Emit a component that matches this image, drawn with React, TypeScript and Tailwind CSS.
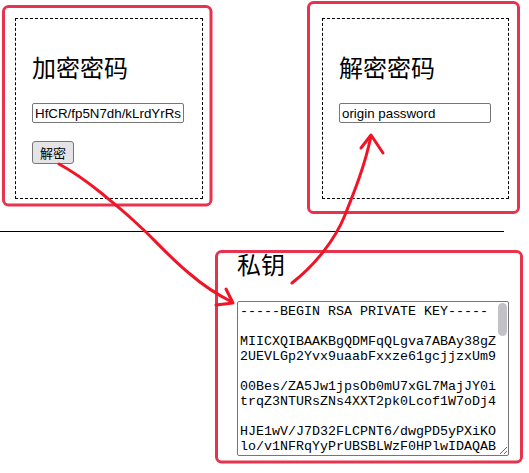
import React from "react";

const cjk = { fontFamily: '"Noto Sans CJK SC", "Noto Sans", sans-serif' };

const keyText = [
  "-----BEGIN RSA PRIVATE KEY-----",
  "",
  "MIICXQIBAAKBgQDMFqQLgva7ABAy38gZ",
  "2UEVLGp2Yvx9uaabFxxze61gcjjzxUm9",
  "",
  "00Bes/ZA5Jw1jpsOb0mU7xGL7MajJY0i",
  "trqZ3NTURsZNs4XXT2pk0Lcof1W7oDj4",
  "",
  "HJE1wV/J7D32FLCPNT6/dwgPD5yPXiKO",
  "lo/v1NFRqYyPrUBSBLWzF0HPlwIDAQAB",
  "",
  "AoGAHqZ0kS3Vd8ZtM1qXwP4yR7cL2nFj",
  "Eo9uT5bWk6sA3mGh0YxNq8vDr1lIeZpC",
  "",
  "w2KfJ7tUaO4nXs9gBy6QmLh3dVcR5iPe",
  "Z0oMq1uWk8TnAf2jYbSx7GlEr4Hd6NvC",
  "",
  "QJBAPx3mK9rTn2vWq7LcF1dGh8sYe4Ua",
  "0bZkN6oXj5RiMp3tEw9yHl2gVfSu1CqD",
  "",
  "AkEAz7Hn4KqL2wPx9cVb1mTr8sYe3Fgd",
  "Jo6uNa5Zi0RkWl2tXq7yMh4pEv1GsCbO",
  "",
  "AkBf8sLq2Wn5Xv7Kc1Tr9mYe3Hgd4Jpo",
  "Ua6Zi0NkRl2tEw9yMh5qGv1XsCbOz7Fn",
  "",
  "-----END RSA PRIVATE KEY-----",
].join("\n");

const Panel = ({
  title,
  value,
  button,
  className,
}: {
  title: string;
  value: string;
  button?: string;
  className: string;
}) => (
  <div
    className={`h-[181px] border border-dashed border-black pt-[32px] px-[16px] ${className}`}
  >
    <h2 className="text-[24px] leading-[32px] font-normal text-black" style={cjk}>
      {title}
    </h2>
    <input
      className="mt-[20px] block h-[20px] w-[152px] rounded-[2px] border border-[#767676] px-[2px] text-[13.33px] text-black outline-none"
      style={{ fontFamily: '"Liberation Sans", Arial, sans-serif' }}
      defaultValue={value}
    />
    {button && (
      <button
        className="mt-[18px] block h-[23px] w-[42px] rounded-[3px] border border-[#767676] bg-[#e4e4e6] text-[13px] leading-none text-black"
        style={cjk}
      >
        {button}
      </button>
    )}
  </div>
);

export default function App() {
  return (
    <div className="relative h-[473px] w-[529px] overflow-hidden bg-white">
      <div className="flex pt-[18px]">
        <Panel className="ml-[15px] w-[188px]" title="加密密码" value="HfCR/fp5N7dh/kLrdYrRs" button="解密" />
        <Panel className="ml-[119px] w-[187px]" title="解密密码" value="origin password" />
      </div>

      <hr className="mt-[32px] w-[504px] border-0 border-t border-black" />

      <div className="ml-[237px] pt-[16px]">
        <h2 className="text-[24px] leading-[32px] font-normal text-black" style={cjk}>
          私钥
        </h2>
        <div className="relative mt-[21px] w-[272px]">
          <textarea
            wrap="off"
            defaultValue={keyText}
            className="block h-[155px] w-[272px] overflow-x-hidden overflow-y-scroll rounded-[2px] border border-[#767676] p-[2px] text-[13.33px] leading-[15px] text-black outline-none"
            style={{ fontFamily: '"Liberation Mono", "Courier New", monospace' }}
          />
          {/* scroll thumb */}
          <div className="pointer-events-none absolute right-[2px] top-[2px] h-[33px] w-[9px] rounded-full bg-[#c1c1c7]" />
        </div>
      </div>

      {/* hand-drawn annotations */}
      <svg
        className="pointer-events-none absolute inset-0"
        width="529"
        height="473"
        viewBox="0 0 529 473"
        fill="none"
      >
        <g stroke="#e8334f" strokeWidth="3" strokeLinejoin="round">
          <rect x="3.5" y="6.5" width="207.5" height="198.5" rx="5" />
          <rect x="308.5" y="2.5" width="210" height="210" rx="5" />
          <rect x="216.5" y="251.5" width="305" height="210.5" rx="5" />
        </g>
        <g stroke="#f01426" strokeWidth="3" strokeLinecap="round" strokeLinejoin="round">
          <path d="M59 164 C70 170 85 180 100 192 C112 202 120 208 133 220 L147 233 C160 246 175 262 190 274 C205 287 218 295 232 302" />
          <path d="M226 289 L233 303 L216 305" />
          <path d="M292 283 C315 265 335 240 345 215 C355 190 365 165 371 136" />
          <path d="M361 148 L371 135 L383 153" />
        </g>
      </svg>
    </div>
  );
}
